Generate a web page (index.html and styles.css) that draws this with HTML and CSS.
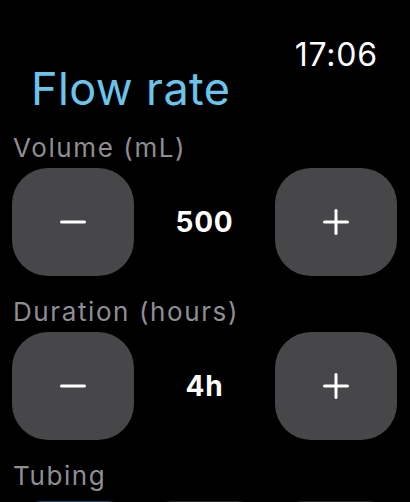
FILE: index.html
```html
<!DOCTYPE html>
<html>
<head>
<meta charset="utf-8">
<link rel="stylesheet" href="styles.css">
</head>
<body>
<div class="screen">
  <div class="time">17:06</div>
  <h1 class="title">Flow rate</h1>

  <div class="label first">Volume (mL)</div>
  <div class="stepper">
    <button class="btn" aria-label="Decrease">
      <svg width="26" height="4" viewBox="0 0 26 4"><line x1="1.5" y1="2" x2="24.5" y2="2" stroke="#fff" stroke-width="3" stroke-linecap="round"/></svg>
    </button>
    <div class="value">500</div>
    <button class="btn" aria-label="Increase">
      <svg width="26" height="26" viewBox="0 0 26 26"><line x1="1.5" y1="13" x2="24.5" y2="13" stroke="#fff" stroke-width="3" stroke-linecap="round"/><line x1="13" y1="1.5" x2="13" y2="24.5" stroke="#fff" stroke-width="3" stroke-linecap="round"/></svg>
    </button>
  </div>

  <div class="label">Duration (hours)</div>
  <div class="stepper">
    <button class="btn" aria-label="Decrease">
      <svg width="26" height="4" viewBox="0 0 26 4"><line x1="1.5" y1="2" x2="24.5" y2="2" stroke="#fff" stroke-width="3" stroke-linecap="round"/></svg>
    </button>
    <div class="value">4h</div>
    <button class="btn" aria-label="Increase">
      <svg width="26" height="26" viewBox="0 0 26 26"><line x1="1.5" y1="13" x2="24.5" y2="13" stroke="#fff" stroke-width="3" stroke-linecap="round"/><line x1="13" y1="1.5" x2="13" y2="24.5" stroke="#fff" stroke-width="3" stroke-linecap="round"/></svg>
    </button>
  </div>

  <div class="label">Tubing</div>
  <div class="pills">
    <div class="pill selected"></div>
    <div class="pill"></div>
    <div class="pill"></div>
  </div>
</div>
</body>
</html>
```

FILE: styles.css
```css
html, body {
  margin: 0;
  padding: 0;
  background: #000;
  overflow: hidden;
}
body {
  width: 410px;
  height: 502px;
  font-family: Inter, "Noto Sans", sans-serif;
  color: #fff;
}
.screen {
  box-sizing: border-box;
  height: 502px;
  overflow: hidden;
  padding: 43px 13px 0 12px;
  display: flex;
  flex-direction: column;
}
.time {
  align-self: flex-end;
  margin-right: 19px;
  font-size: 32px;
  line-height: 24px;
  height: 24px;
  font-weight: 400;
  letter-spacing: 0.8px;
  flex-shrink: 0;
}
.title {
  margin: 0 0 0 19px;
  font-size: 45px;
  line-height: 44px;
  font-weight: 400;
  letter-spacing: 0.4px;
  color: #6ac4eb;
  flex-shrink: 0;
}
.label {
  margin: 21px 0 0 1px;
  font-size: 26px;
  line-height: 30px;
  letter-spacing: 1.6px;
  color: #8e8e93;
  flex-shrink: 0;
}
.label.first {
  margin-top: 22px;
}
.stepper {
  margin-top: 5px;
  display: flex;
  align-items: center;
  justify-content: space-between;
  flex-shrink: 0;
}
.btn {
  width: 122px;
  height: 108px;
  border: none;
  padding: 0;
  border-radius: 36px;
  background: #474749;
  display: flex;
  align-items: center;
  justify-content: center;
}
.value {
  flex: 1;
  text-align: center;
  font-size: 28px;
  font-weight: 700;
  line-height: 32px;
  letter-spacing: 0.8px;
}
.pills {
  margin: 10px 7px 0 8px;
  display: flex;
  gap: 22px;
  flex-shrink: 0;
}
.pill {
  flex: 1;
  height: 60px;
  border-radius: 22px;
  background: #262628;
}
.pill.selected {
  background: #0c4166;
}
```
